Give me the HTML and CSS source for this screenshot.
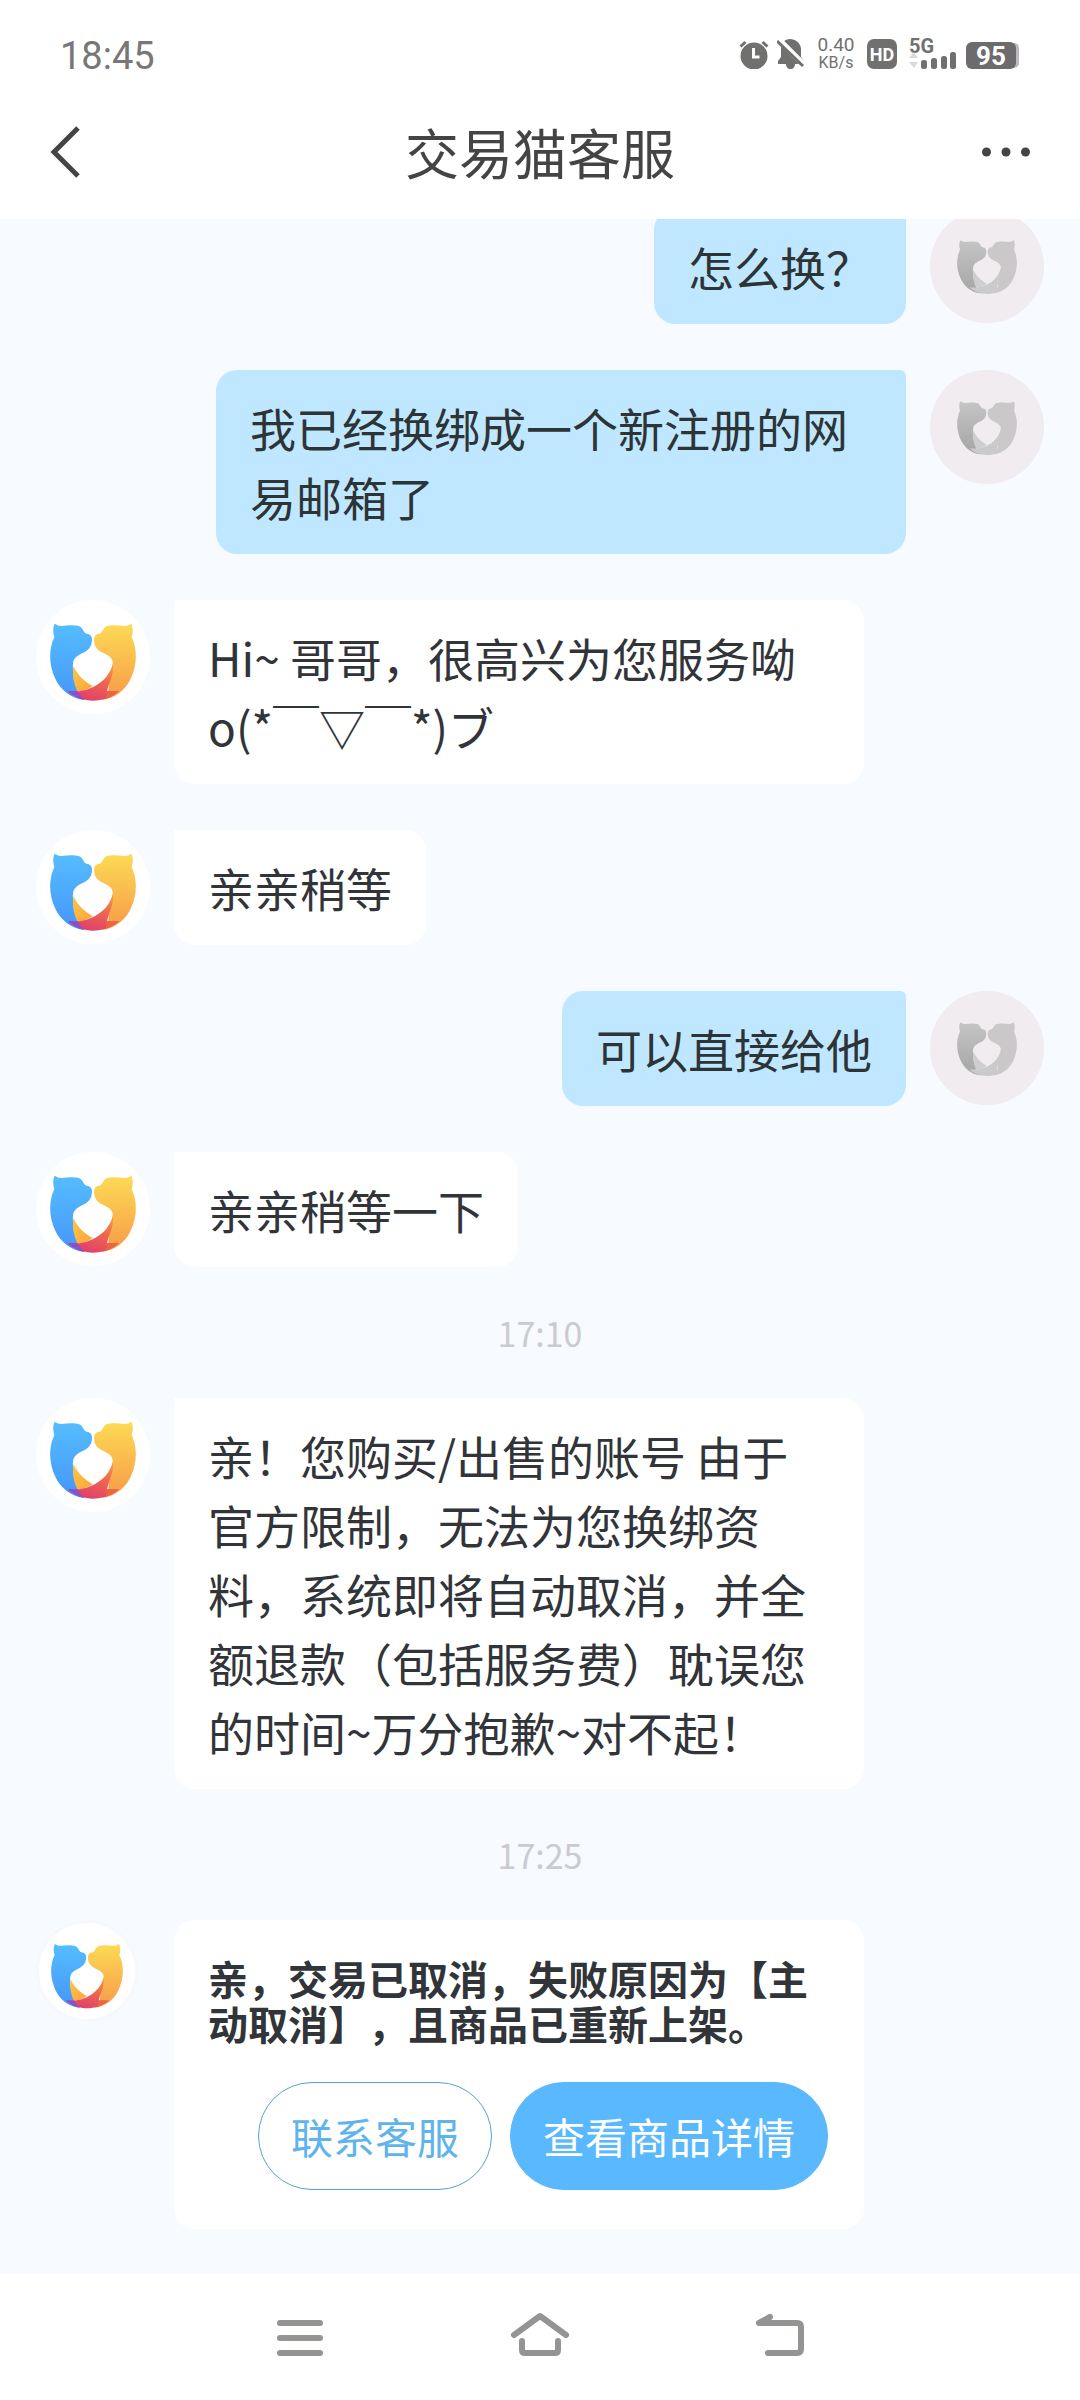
FILE: index.html
```html
<!DOCTYPE html>
<html lang="zh-CN">
<head>
<meta charset="utf-8">
<meta name="viewport" content="width=device-width, initial-scale=1">
<title>交易猫客服</title>
<link rel="stylesheet" href="styles.css">
</head>
<body>
<svg class="defs" width="0" height="0" aria-hidden="true">
  <defs>
    <linearGradient id="blue" x1="0" y1="0" x2="0" y2="1"><stop offset="0" stop-color="#55bdfd"/><stop offset="1" stop-color="#4596fb"/></linearGradient>
    <linearGradient id="gold" x1="0" y1="0" x2="0" y2="1"><stop offset="0" stop-color="#fddb55"/><stop offset="1" stop-color="#f79a48"/></linearGradient>
    <linearGradient id="band" x1="0" y1="0" x2="1" y2="1"><stop offset="0" stop-color="#fcc545"/><stop offset="1" stop-color="#fba53c"/></linearGradient>
    <linearGradient id="red" x1="0.9" y1="0" x2="0.4" y2="1"><stop offset="0" stop-color="#f79a48"/><stop offset="0.5" stop-color="#ee6350"/><stop offset="1" stop-color="#e0406c"/></linearGradient>
    <linearGradient id="ash" x1="0" y1="0" x2="0" y2="1"><stop offset="0" stop-color="#c6c5c6"/><stop offset="1" stop-color="#a6a5a6"/></linearGradient>
    <symbol id="logo" viewBox="42 68 258 232">
      <path fill="url(#blue)" d="M56 69q9 7 21 7c18-3 42-3 53 1 12 5 12 20 22 22q16 2 16 17c0 20-8 30-22 38-20 9-34 18-35 34-2 25 3 55 14 84l20 26c-45-6-74-34-88-66C38 190 38 145 55 109c-5-15-4-30 1-40z"/>
      <path fill="url(#gold)" d="M286 69q-9 7-21 7c-18-3-42-3-53 1-12 5-12 20-22 22q-16 2-16 17c0 20 8 30 22 38 20 9 36 18 34 34-3 22-12 50-13 84l-20 26c45-6 74-34 88-66 19-42 19-87 2-123 5-15 4-30-1-40z"/>
      <path fill="url(#band)" d="M112 195c12 28 33 47 58 61-12 10-27 15-45 17-13-25-16-50-13-78z"/>
      <path fill="url(#red)" d="M230 190c-8 35-40 72-100 82H95c23 19 50 28 76 28 27 0 57-9 78-28h-36c7-32 21-47 17-82z"/>
      <path fill="#8b50c8" d="M95 272h30q8 16 20 26-28-6-50-26z"/>
      <path fill="#ec6541" d="M213 272h36q-18 16-42 24 7-10 6-24z"/>
    </symbol>
    <symbol id="logo-gray" viewBox="42 68 258 232">
      <path fill="url(#ash)" d="M56 69q9 7 21 7c18-3 42-3 53 1 12 5 12 20 22 22q16 2 16 17c0 20-8 30-22 38-20 9-34 18-35 34-2 25 3 55 14 84l20 26c-45-6-74-34-88-66C38 190 38 145 55 109c-5-15-4-30 1-40z"/>
      <path fill="#cac8c9" d="M286 69q-9 7-21 7c-18-3-42-3-53 1-12 5-12 20-22 22q-16 2-16 17c0 20 8 30 22 38 20 9 36 18 34 34-3 22-12 50-13 84l-20 26c45-6 74-34 88-66 19-42 19-87 2-123 5-15 4-30-1-40z"/>
      <path fill="#cfcecf" d="M112 195c12 28 33 47 58 61-12 10-27 15-45 17-13-25-16-50-13-78z"/>
      <path fill="#cbcacb" d="M230 190c-8 35-40 72-100 82H95c23 19 50 28 76 28 27 0 57-9 78-28h-36c7-32 21-47 17-82z"/>
    </symbol>
  </defs>
</svg>

<div class="screen">
  <div class="status">
    <time class="clock">18:45</time>
    <div class="indicators">
      <svg class="alarm" viewBox="0 0 30 30" width="30" height="30" aria-label="闹钟"><circle cx="15" cy="17" r="13.500" fill="#70716f"/><path d="M14.500 9v9h6" fill="none" stroke="#fff" stroke-width="3"/><path d="M1.500 7.500l5-4.500M28.500 7.500l-5-4.500" stroke="#70716f" stroke-width="3"/></svg>
      <svg class="bell" viewBox="0 0 28 30" width="28" height="30" aria-label="静音"><path fill="#70716f" d="M1 25v-3l3-4v-8C4 4 8 0 13 0s11 4 11 10v8l3 4v3h-9c0 7-9 7-9 0z"/><path d="M0 -1l28 28" stroke="#fff" stroke-width="6"/><path d="M0 2l26 25" stroke="#70716f" stroke-width="3"/></svg>
      <div class="speed"><span>0.40</span><span>KB/s</span></div>
      <div class="hd">HD</div>
      <div class="network">
        <span class="gen">5G</span>
        <svg viewBox="0 0 47 18" width="47" height="18" aria-hidden="true"><path fill="#dadada" d="M0 7l5-6 4 6zM0 11h9l-4 6z"/><g fill="#70716f"><rect x="12" y="9" width="6" height="9" rx="2.500"/><rect x="22" y="7" width="6" height="11" rx="2.500"/><rect x="32" y="5" width="6" height="13" rx="2.500"/><rect x="41" y="1" width="6" height="17" rx="2.500"/></g></svg>
      </div>
      <div class="battery">95</div>
    </div>
  </div>

  <header class="header">
    <button class="icon-button" aria-label="返回"><svg viewBox="0 0 30 52" width="30" height="52"><path d="M28 2L4 26l24 24" fill="none" stroke="#444" stroke-width="5"/></svg></button>
    <h1>交易猫客服</h1>
    <button class="icon-button" aria-label="更多"><svg viewBox="0 0 48 10" width="48" height="10" fill="#444"><circle cx="4.500" cy="5" r="4.500"/><circle cx="24" cy="5" r="4.500"/><circle cx="43.500" cy="5" r="4.500"/></svg></button>
  </header>

  <main class="chat">
    <div class="row mine"><div class="avatar"><svg><use href="#logo-gray"/></svg></div><p class="bubble">怎么换？</p></div>
    <div class="row mine"><div class="avatar"><svg><use href="#logo-gray"/></svg></div><p class="bubble">我已经换绑成一个新注册的网易邮箱了</p></div>
    <div class="row"><div class="avatar"><svg><use href="#logo"/></svg></div><p class="bubble">Hi~ 哥哥，很高兴为您服务呦 o(*￣▽￣*)ブ</p></div>
    <div class="row"><div class="avatar"><svg><use href="#logo"/></svg></div><p class="bubble">亲亲稍等</p></div>
    <div class="row mine"><div class="avatar"><svg><use href="#logo-gray"/></svg></div><p class="bubble">可以直接给他</p></div>
    <div class="row"><div class="avatar"><svg><use href="#logo"/></svg></div><p class="bubble">亲亲稍等一下</p></div>
    <time class="stamp">17:10</time>
    <div class="row"><div class="avatar"><svg><use href="#logo"/></svg></div><p class="bubble">亲！您购买/出售的账号 由于官方限制，无法为您换绑资料，系统即将自动取消，并全额退款（包括服务费）耽误您的时间~万分抱歉~对不起！</p></div>
    <time class="stamp">17:25</time>
    <div class="row">
      <div class="avatar small"><svg><use href="#logo"/></svg></div>
      <section class="card">
        <p>亲，交易已取消，失败原因为【主动取消】，且商品已重新上架。</p>
        <div class="actions">
          <button class="action">联系客服</button>
          <button class="action primary">查看商品详情</button>
        </div>
      </section>
    </div>
  </main>

  <nav class="nav">
    <button class="icon-button" aria-label="最近任务"><svg viewBox="0 0 60 46" width="60" height="46"><path d="M10 12h40M10 27h40M10 42h40"/></svg></button>
    <button class="icon-button" aria-label="主屏幕"><svg viewBox="0 0 60 46" width="60" height="46"><path d="M4 24L30 5l26 19M12 30v9q0 3 3 3h30q3 0 3-3v-9"/></svg></button>
    <button class="icon-button" aria-label="返回上一级"><svg viewBox="0 0 60 46" width="60" height="46"><path d="M20 6L9 12h38q4 0 4 4v22q0 4-4 4H18"/></svg></button>
  </nav>
</div>
</body>
</html>
```

FILE: styles.css
```css
* {
  box-sizing: border-box;
}

body {
  margin: 0;
  background: #fff;
  color: #313438;
  font-family: "Noto Sans CJK SC", sans-serif;
  text-spacing-trim: space-all;
}

button {
  border: 0;
  padding: 0;
  background: none;
  font-family: inherit;
}

h1,
p {
  margin: 0;
}

.defs {
  position: absolute;
}

.screen {
  display: flex;
  flex-direction: column;
  height: 100vh;
}

.status {
  display: flex;
  align-items: center;
  justify-content: space-between;
  height: 84px;
  padding: 24px 60px 0;
  color: #70716f;
  font-family: Roboto, sans-serif;
}

.clock {
  padding-top: 4px;
  color: #777;
  font-size: 38px;
  line-height: 40px;
}

.indicators {
  display: flex;
  align-items: center;
}

.bell {
  margin-left: 8px;
}

.speed {
  display: flex;
  flex-direction: column;
  align-items: center;
  width: 40px;
  margin: 0 11px;
  font-size: 19px;
  line-height: 18px;
}

.speed span + span {
  font-size: 16px;
}

.hd {
  width: 30px;
  height: 30px;
  border-radius: 7px;
  background: #70716f;
  color: #fff;
  font-size: 18px;
  font-weight: 700;
  line-height: 31px;
  text-align: center;
}

.network {
  display: flex;
  flex-direction: column;
  height: 30px;
  margin: 0 10px 0 12px;
}

.gen {
  height: 12px;
  font-size: 20px;
  font-weight: 700;
  line-height: 14px;
}

.battery {
  width: 50px;
  height: 27px;
  margin: 3px 4px 0 0;
  border-radius: 6px;
  background: #6d6b6d;
  box-shadow: 4px 0 0 -1px #bbb;
  color: #fff;
  font-size: 26px;
  font-weight: 700;
  line-height: 28px;
  text-align: center;
}

.header {
  display: flex;
  align-items: center;
  justify-content: space-between;
  height: 135px;
  padding: 0 50px;
}

.header .icon-button {
  display: flex;
  width: 48px;
}

.header h1 {
  color: #444;
  font-size: 54px;
  font-weight: 400;
  line-height: 72px;
}

.chat {
  display: flex;
  flex: 1;
  flex-direction: column;
  justify-content: flex-end;
  gap: 46px;
  min-height: 0;
  padding: 0 36px 45px;
  overflow: hidden;
  background: #f7faff;
}

.row {
  display: flex;
  align-items: flex-start;
  gap: 24px;
}

.mine {
  flex-direction: row-reverse;
}

.avatar {
  display: flex;
  flex: none;
  align-items: center;
  justify-content: center;
  width: 114px;
  height: 114px;
  padding-top: 10px;
  border-radius: 50%;
  background: #fff;
}

.avatar svg {
  width: 86px;
  height: 78px;
}

.mine .avatar {
  padding-top: 2px;
  background: #f0ecef;
}

.mine .avatar svg {
  width: 60px;
  height: 54px;
}

.avatar.small {
  width: 102px;
  height: 102px;
  margin-right: 12px;
  border: 3px solid #f7f8fe;
}

.avatar.small svg {
  width: 72px;
  height: 66px;
}

.bubble {
  max-width: 690px;
  padding: 23px 34px;
  border-radius: 0 21px 21px 21px;
  background: #fff;
  font-size: 46px;
  line-height: 69px;
}

.mine .bubble {
  border-radius: 21px 6px 21px 21px;
  background: #bfe7ff;
  color: #2d3436;
}

.stamp {
  color: #c9cbd0;
  font-size: 34px;
  line-height: 39px;
  text-align: center;
}

.card {
  max-width: 690px;
  padding: 36px 36px 39px 34px;
  border-radius: 21px;
  background: #fff;
}

.card p {
  font-size: 40px;
  font-weight: 700;
  line-height: 45px;
}

.actions {
  display: flex;
  flex-wrap: wrap;
  justify-content: flex-end;
  gap: 18px;
  margin-top: 36px;
}

.action {
  height: 108px;
  padding: 0 32px 2px;
  border: 1px solid #4fa3dc;
  border-radius: 54px;
  color: #60b4ec;
  font-size: 42px;
}

.primary {
  border-color: #5ab8ff;
  background: #5ab8ff;
  color: #fff;
}

.nav {
  display: flex;
  align-items: center;
  justify-content: center;
  gap: 180px;
  height: 126px;
  padding-bottom: 6px;
}

.nav svg {
  display: block;
  fill: none;
  stroke: #929592;
  stroke-linecap: round;
  stroke-linejoin: round;
  stroke-width: 6;
}
```
